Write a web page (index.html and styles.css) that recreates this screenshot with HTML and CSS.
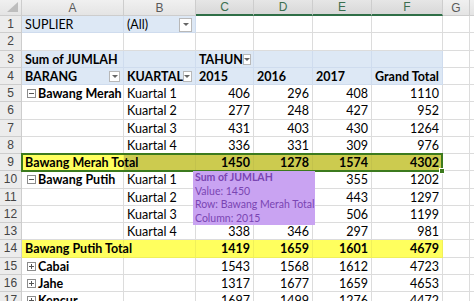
FILE: index.html
```html
<!DOCTYPE html>
<html lang="id">
<head>
  <meta charset="UTF-8" />
  <title>Pivot JUMLAH</title>
  <link rel="stylesheet" href="styles.css">
</head>
<body>

  <div class="sheet">
    <!-- kepala kolom -->
    <div class="corner"><span class="corner-tri"></span></div>
    <div class="col-head">A</div>
    <div class="col-head">B</div>
    <div class="col-head sel">C</div>
    <div class="col-head sel">D</div>
    <div class="col-head sel">E</div>
    <div class="col-head sel">F</div>
    <div class="col-head">G</div>
    <div class="col-head"></div>

    <!-- 1 -->
    <div class="row-head">1</div>
    <div class="c pv">SUPLIER</div>
    <div class="c pv">(All)<span class="dd"></span></div>
    <div class="c"></div><div class="c"></div><div class="c"></div><div class="c"></div><div class="c"></div><div class="c"></div>

    <!-- 2 -->
    <div class="row-head">2</div>
    <div class="c"></div><div class="c"></div><div class="c"></div><div class="c"></div><div class="c"></div><div class="c"></div><div class="c"></div><div class="c"></div>

    <!-- 3 -->
    <div class="row-head">3</div>
    <div class="c pv b ov">Sum of JUMLAH</div>
    <div class="c pv"></div>
    <div class="c pv b">TAHUN<span class="dd small"></span></div>
    <div class="c pv"></div><div class="c pv"></div><div class="c pv"></div>
    <div class="c"></div><div class="c"></div>

    <!-- 4 -->
    <div class="row-head">4</div>
    <div class="c pv b">BARANG<span class="dd small"></span></div>
    <div class="c pv b">KUARTAL<span class="dd small"></span></div>
    <div class="c pv b">2015</div>
    <div class="c pv b">2016</div>
    <div class="c pv b">2017</div>
    <div class="c pv b">Grand Total</div>
    <div class="c"></div><div class="c"></div>

    <!-- 5 -->
    <div class="row-head">5</div>
    <div class="c b ov"><span class="tog minus"></span>Bawang Merah</div>
    <div class="c">Kuartal 1</div>
    <div class="c n">406</div><div class="c n">296</div><div class="c n">408</div><div class="c n">1110</div>
    <div class="c"></div><div class="c"></div>

    <!-- 6 -->
    <div class="row-head">6</div>
    <div class="c"></div>
    <div class="c">Kuartal 2</div>
    <div class="c n">277</div><div class="c n">248</div><div class="c n">427</div><div class="c n">952</div>
    <div class="c"></div><div class="c"></div>

    <!-- 7 -->
    <div class="row-head">7</div>
    <div class="c"></div>
    <div class="c">Kuartal 3</div>
    <div class="c n">431</div><div class="c n">403</div><div class="c n">430</div><div class="c n">1264</div>
    <div class="c"></div><div class="c"></div>

    <!-- 8 -->
    <div class="row-head">8</div>
    <div class="c"></div>
    <div class="c">Kuartal 4</div>
    <div class="c n">336</div><div class="c n">331</div><div class="c n">309</div><div class="c n">976</div>
    <div class="c"></div><div class="c"></div>

    <!-- 9 (baris terpilih) -->
    <div class="row-head">9</div>
    <div class="c yl b ov">Bawang Merah Total</div>
    <div class="c ys"></div>
    <div class="c ys n b">1450</div><div class="c ys n b">1278</div><div class="c ys n b">1574</div><div class="c ys n b">4302</div>
    <div class="c"></div><div class="c"></div>

    <!-- 10 (C..D tertutup tooltip) -->
    <div class="row-head">10</div>
    <div class="c b ov"><span class="tog minus"></span>Bawang Putih</div>
    <div class="c">Kuartal 1</div>
    <div class="c n"></div><div class="c n"></div><div class="c n">355</div><div class="c n">1202</div>
    <div class="c"></div><div class="c"></div>

    <!-- 11 -->
    <div class="row-head">11</div>
    <div class="c"></div>
    <div class="c">Kuartal 2</div>
    <div class="c n"></div><div class="c n"></div><div class="c n">443</div><div class="c n">1297</div>
    <div class="c"></div><div class="c"></div>

    <!-- 12 -->
    <div class="row-head">12</div>
    <div class="c"></div>
    <div class="c">Kuartal 3</div>
    <div class="c n"></div><div class="c n"></div><div class="c n">506</div><div class="c n">1199</div>
    <div class="c"></div><div class="c"></div>

    <!-- 13 -->
    <div class="row-head">13</div>
    <div class="c"></div>
    <div class="c">Kuartal 4</div>
    <div class="c n">338</div><div class="c n">346</div><div class="c n">297</div><div class="c n">981</div>
    <div class="c"></div><div class="c"></div>

    <!-- 14 -->
    <div class="row-head">14</div>
    <div class="c yl b ov">Bawang Putih Total</div>
    <div class="c yl"></div>
    <div class="c yl n b">1419</div><div class="c yl n b">1659</div><div class="c yl n b">1601</div><div class="c yl n b">4679</div>
    <div class="c"></div><div class="c"></div>

    <!-- 15 -->
    <div class="row-head">15</div>
    <div class="c b"><span class="tog plus"></span>Cabai</div>
    <div class="c"></div>
    <div class="c n">1543</div><div class="c n">1568</div><div class="c n">1612</div><div class="c n">4723</div>
    <div class="c"></div><div class="c"></div>

    <!-- 16 -->
    <div class="row-head">16</div>
    <div class="c b"><span class="tog plus"></span>Jahe</div>
    <div class="c"></div>
    <div class="c n">1317</div><div class="c n">1677</div><div class="c n">1659</div><div class="c n">4653</div>
    <div class="c"></div><div class="c"></div>

    <!-- 17 -->
    <div class="row-head">17</div>
    <div class="c b"><span class="tog plus"></span>Kencur</div>
    <div class="c"></div>
    <div class="c n">1697</div><div class="c n">1499</div><div class="c n">1276</div><div class="c n">4472</div>
    <div class="c"></div><div class="c"></div>

    <!-- seleksi A9:F9 -->
    <div class="selection"><span class="fill-handle"></span></div>

    <!-- tooltip pivot -->
    <div class="tip">
      <div class="tip-title">Sum of JUMLAH</div>
      <div>Value: 1450</div>
      <div>Row: Bawang Merah Total</div>
      <div>Column: 2015</div>
    </div>
  </div>

</body>
</html>
```

FILE: styles.css
```css
/* reset */
* {
  margin: 0;
  padding: 0;
  box-sizing: border-box;
}

body {
  font-family: Lato, "Liberation Sans", sans-serif;
  background-color: #fff;
  color: #000;
  overflow: hidden;
}

/* lembar kerja */
.sheet {
  position: relative;
  display: grid;
  grid-template-columns: 22px 102px 72px 58px 59px 59px 71px 27px 1fr;
  grid-template-rows: 16px repeat(17, 17.25px);
  width: 474px;
  font-size: 12.5px;
}

.corner,
.col-head,
.row-head {
  background: linear-gradient(#f0f0f0, #e4e4e4);
  border-right: 1px solid #cdcdcd;
  border-bottom: 1px solid #cdcdcd;
  color: #5a5a5a;
  font-family: "Liberation Sans", sans-serif;
  font-size: 12px;
  display: flex;
  align-items: center;
  justify-content: center;
}

.corner {
  justify-content: flex-end;
  align-items: flex-end;
  padding: 0 3px 3px 0;
}

.corner-tri {
  width: 0;
  height: 0;
  border-left: 11px solid transparent;
  border-bottom: 10px solid #bdbdbd;
}

.col-head.sel {
  background: linear-gradient(#e6e6e6, #d8d8d8);
  border-bottom: 2px solid #2f6f47;
  color: #3b6f4f;
}

.row-head {
  background: #ececec;
  color: #444;
}

/* sel */
.c {
  display: flex;
  align-items: center;
  padding: 1px 3px 0 3px;
  border-right: 1px solid #dcdcdc;
  border-bottom: 1px solid #dcdcdc;
  white-space: nowrap;
  overflow: visible;
  min-width: 0;
}

.c.n {
  justify-content: flex-end;
}

.b {
  font-weight: bold;
}

.ov {
  z-index: 1;
}

/* pivot header */
.pv {
  background-color: #dde8f5;
  border-color: #cfdcee;
}

/* baris total */
.yl {
  background-color: #ffff5e;
  border-color: #f0f05a;
}

.ys {
  background-color: #cccb4f;
  border-color: #c3c24c;
}

/* tombol filter */
.dd {
  margin-left: auto;
  width: 13px;
  height: 14px;
  background: #fff;
  border: 1px solid #b8b8b8;
  display: flex;
  align-items: center;
  justify-content: center;
}

.dd::after {
  content: "";
  border-left: 3px solid transparent;
  border-right: 3px solid transparent;
  border-top: 3px solid #666;
}

.dd.small {
  width: 11px;
  height: 11px;
}

/* tombol expand/collapse */
.tog {
  position: relative;
  width: 9px;
  height: 9px;
  border: 1px solid #8c8c8c;
  background: #fff;
  margin: 0 2px 0 2px;
  flex-shrink: 0;
}

.tog::before {
  content: "";
  position: absolute;
  left: 1px;
  top: 3px;
  width: 5px;
  height: 1px;
  background: #555;
}

.tog.plus::after {
  content: "";
  position: absolute;
  left: 3px;
  top: 1px;
  width: 1px;
  height: 5px;
  background: #555;
}

/* seleksi (di atas sel, jadi absolute) */
.selection {
  position: absolute;
  left: 21px;
  top: 153px;
  width: 422px;
  height: 19px;
  border: 2px solid #3c7a1e;
  z-index: 2;
}

.fill-handle {
  position: absolute;
  right: -4px;
  bottom: -4px;
  width: 6px;
  height: 6px;
  background: #3c7a1e;
  border: 1px solid #fff;
}

/* tooltip */
.tip {
  position: absolute;
  left: 193px;
  top: 171px;
  width: 122px;
  height: 54px;
  padding: 0 0 0 2px;
  background-color: #c9a3f2;
  color: #7a45b3;
  font-size: 10.5px;
  line-height: 13.7px;
  white-space: nowrap;
  overflow: hidden;
  z-index: 3;
}

.tip-title {
  font-weight: bold;
}
```
